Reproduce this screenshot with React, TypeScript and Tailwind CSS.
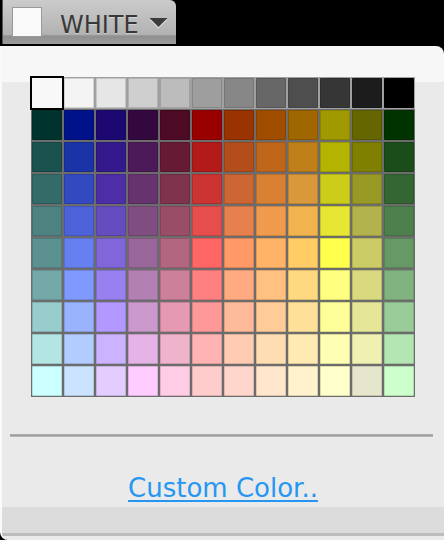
import React from "react";

const grays = [
  "#f8f8f8", "#f4f4f4", "#e6e6e6", "#cfcfcf", "#bcbcbc", "#9e9e9e",
  "#878787", "#676767", "#4e4e4e", "#363636", "#1c1c1c", "#000000",
];

const rows: string[][] = [
  ["#00332e", "#00128a", "#1c0870", "#33083f", "#4d0a24", "#990000", "#993300", "#a04d00", "#a06600", "#a09a00", "#666600", "#003300"],
  ["#1a524e", "#1a33a6", "#33198c", "#4d1a59", "#661a33", "#b31a1a", "#b34d1a", "#bf661a", "#bf801a", "#b3b300", "#808000", "#1a4d1a"],
  ["#336b68", "#3349c0", "#4d2ea6", "#66336e", "#80334d", "#cc3333", "#cc6633", "#d98033", "#d9993a", "#cccc1a", "#999926", "#336633"],
  ["#4d8280", "#4d62d9", "#664dbf", "#804d80", "#994d66", "#e64d4d", "#e6804d", "#f09a4d", "#f0b34d", "#e6e633", "#b3b34d", "#4d804d"],
  ["#5c9191", "#6680f0", "#8066d9", "#996699", "#b36680", "#ff6666", "#ff9966", "#ffb366", "#ffcc66", "#ffff4d", "#cccc66", "#669966"],
  ["#75a8a8", "#8099ff", "#9980f0", "#b380b3", "#cc8099", "#ff8080", "#ffaa80", "#ffc080", "#ffd980", "#ffff80", "#d9d980", "#80b380"],
  ["#99cccc", "#99b3ff", "#b399ff", "#cc99cc", "#e699b3", "#ff9999", "#ffbb99", "#ffcc99", "#ffe099", "#ffff99", "#e6e699", "#99cc99"],
  ["#b3e6e3", "#b3ccff", "#ccb3ff", "#e6b3e6", "#f0b3cc", "#ffb3b3", "#ffccb3", "#ffddb3", "#ffeab3", "#ffffb3", "#f0f0b3", "#b3e6b3"],
  ["#ccffff", "#cce3ff", "#e3ccff", "#ffccff", "#ffcce6", "#ffcccc", "#ffd6cc", "#ffe6cc", "#fff2cc", "#ffffcc", "#e6e6cc", "#ccffcc"],
];

const Swatch = ({ color, selected }: { color: string; selected?: boolean }) => (
  <div
    className={
      selected
        ? "w-[30px] h-[30px] outline-2 outline-black"
        : "w-[30px] h-[30px] rounded-[1px] shadow-[inset_0_0_0_1px_rgba(0,0,0,0.14)]"
    }
    style={{ backgroundColor: color }}
  />
);

export default function App() {
  return (
    <div className="w-[444px] h-[540px] bg-black flex flex-col font-['DejaVu_Sans',sans-serif] overflow-hidden">
      {/* dropdown button */}
      <div className="h-[46px] shrink-0">
        <div className="ml-[2px] w-[174px] h-[44px] rounded-tr-md border-l border-[#555] bg-[linear-gradient(#cbcbcb,#b2b2b2_78%,#8f8f8f_82%,#9c9c9c)] flex items-start">
          <div className="ml-[9px] mt-[7px] w-[30px] h-[30px] bg-[#f9f9f9] border border-[#9a9a9a]" />
          <span className="ml-[18px] mt-[13px] text-[24px] leading-[24px] text-[#383838] [text-shadow:0_1px_0_rgba(255,255,255,0.35)]">
            WHITE
          </span>
          <svg className="ml-[10px] mt-[18px]" width="19" height="11" viewBox="0 0 19 11">
            <polygon points="0.5,1.5 18.5,1.5 9.5,10.5" fill="#dcdcdc" />
            <polygon points="0.5,0 18.5,0 9.5,9" fill="#3c3c3c" />
          </svg>
        </div>
      </div>

      {/* panel */}
      <div className="flex-1 flex flex-col rounded-tr-lg rounded-bl-lg border-l-2 border-[#fafafa] bg-[linear-gradient(#f7f7f7_0_36px,#eaeaea_36px)] overflow-hidden">
        <div className="ml-[29px] mt-[31px] w-[384px] p-px bg-[#6c6c6c] flex flex-col gap-[2px]">
          <div className="flex gap-[2px] bg-[#a0a0a0] -m-px p-px">
            {grays.map((c, i) => (
              <Swatch key={c} color={c} selected={i === 0} />
            ))}
          </div>
          {rows.map((row, r) => (
            <div key={r} className="flex gap-[2px]">
              {row.map((c) => (
                <Swatch key={c} color={c} />
              ))}
            </div>
          ))}
        </div>

        <div className="mt-[37px] ml-[8px] mr-[11px] h-[3px] bg-[linear-gradient(#b4b4b4,#9e9e9e_50%,#c4c4c4)]" />

        <div className="mt-[38px] mb-[6px] flex justify-center">
          <a className="text-[26px] leading-[26px] text-[#2597f2] underline underline-offset-[3px] cursor-pointer">
            Custom Color..
          </a>
        </div>

        <div className="h-[29px] bg-[#dcdcdc] border-b-[3px] border-[#bdbdbd]" />
      </div>
    </div>
  );
}
